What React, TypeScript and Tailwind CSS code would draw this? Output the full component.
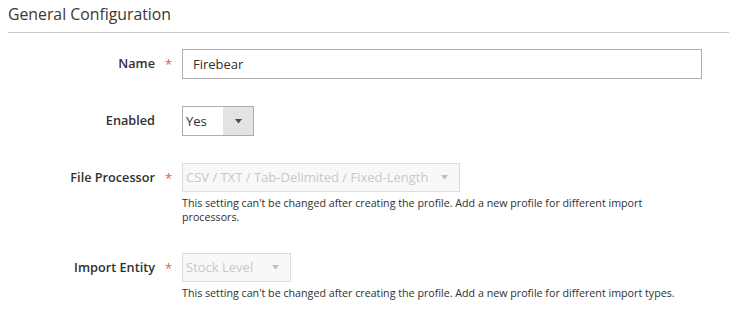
import React from 'react';

function Arrow({ color }: { color: string }) {
  return (
    <svg width="7" height="5" viewBox="0 0 7 5" className="block">
      <path d="M0 0 H7 L3.5 4.5 Z" fill={color} />
    </svg>
  );
}

function Row({ label, children, top, required = true }: { label: string; children: React.ReactNode; top: string; required?: boolean }) {
  return (
    <div className={`flex items-start ${top}`}>
      <div className="w-[155px] shrink-0 text-right text-[12.7px] font-semibold text-[#303030] leading-[29px]">{label}</div>
      <div className="w-[27px] shrink-0 text-center text-[13px] text-[#e4603c] leading-[31px]">{required ? '*' : ''}</div>
      <div>{children}</div>
    </div>
  );
}

export default function App() {
  return (
    <div className="w-[729px] h-[321px] bg-white overflow-hidden" style={{ fontFamily: '"Open Sans", sans-serif' }}>
      <div className="pl-2">
        <h2 className="text-[15.8px] text-[#41362f] font-medium leading-[20px] pt-[4px] pb-[8px] border-b border-[#c8c8c8]">General Configuration</h2>
      </div>

      <Row label="Name" top="mt-[16px]">
        <div className="w-[520px] h-[30px] border border-[#adadad] px-[10px] text-[13px] text-[#303030] leading-[28px]">Firebear</div>
      </Row>

      <Row label="Enabled" top="mt-[26px]" required={false}>
        <div className="flex w-[72px] h-[30px] border border-[#adadad] text-[13px] text-[#303030]">
          <div className="flex-1 pl-[3px] leading-[28px]">Yes</div>
          <div className="w-[30px] bg-[#e3e3e3] flex items-center justify-center"><Arrow color="#514943" /></div>
        </div>
      </Row>

      <Row label="File Processor" top="mt-[27px]">
        <div className="flex w-[278px] h-[29px] border border-[#dcdcdc] bg-[#f8f8f8] text-[13px] text-[#c8c8c8]">
          <div className="flex-1 pl-[3px] leading-[27px]">CSV / TXT / Tab-Delimited / Fixed-Length</div>
          <div className="w-[30px] flex items-center justify-center"><Arrow color="#bdbdbd" /></div>
        </div>
        <p className="mt-[4px] w-[505px] text-[10.7px] leading-[14px] text-[#303030]">
          This setting can't be changed after creating the profile. Add a new profile for different import processors.
        </p>
      </Row>

      <Row label="Import Entity" top="mt-[29px]">
        <div className="flex w-[109px] h-[29px] border border-[#dcdcdc] bg-[#f8f8f8] text-[13px] text-[#c8c8c8]">
          <div className="flex-1 pl-[3px] leading-[27px]">Stock Level</div>
          <div className="w-[30px] flex items-center justify-center"><Arrow color="#bdbdbd" /></div>
        </div>
        <p className="mt-[4px] w-[505px] text-[10.7px] leading-[14px] text-[#303030]">
          This setting can't be changed after creating the profile. Add a new profile for different import types.
        </p>
      </Row>
    </div>
  );
}
